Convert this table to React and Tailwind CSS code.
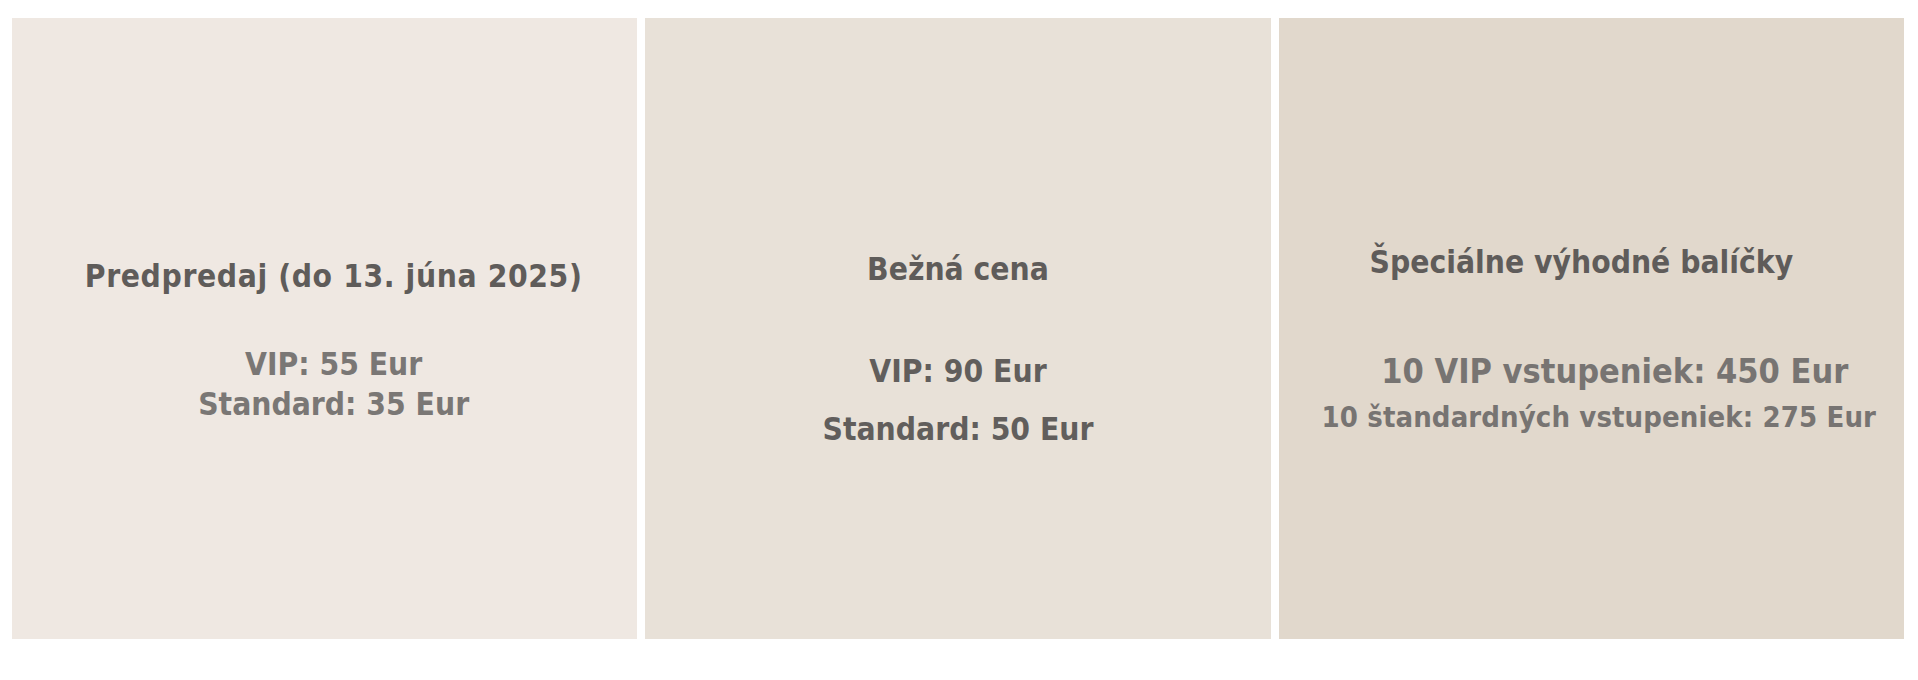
import React from "react";

const font = { fontFamily: '"DejaVu Sans Condensed", "DejaVu Sans", Verdana, sans-serif' };

function App() {
  return (
    <div className="w-[1918px] h-[680px] bg-white pt-[18px] pl-[12px] pr-[14px]" style={font}>
      <div className="grid grid-cols-3 gap-2 h-[621px]">
        {/* predpredaj */}
        <div className="bg-[#efe8e2] flex flex-col items-center pt-[238px] pl-[18px] font-bold text-center">
          <div className="text-[31.5px] leading-[40px] tracking-[0.6px] text-[#5f5c5a]">Predpredaj (do 13. júna 2025)</div>
          <div className="mt-[48px] text-[31.5px] leading-[40px] text-[#7a7775]">VIP: 55 Eur</div>
          <div className="text-[31.5px] leading-[40px] text-[#7a7775]">Standard: 35 Eur</div>
        </div>

        {/* bezna cena */}
        <div className="bg-[#e8e1d8] flex flex-col items-center pt-[231px] font-bold text-center">
          <div className="text-[31.5px] leading-[40px] text-[#5f5c5a]">Bežná cena</div>
          <div className="mt-[62px] text-[31.5px] leading-[40px] text-[#615e5c]">VIP: 90 Eur</div>
          <div className="mt-[18px] text-[31.5px] leading-[40px] text-[#615e5c]">Standard: 50 Eur</div>
        </div>

        {/* balicky */}
        <div className="bg-[#e1d8cc] flex flex-col items-center pt-[224px] font-bold text-center">
          <div className="pr-[20px] text-[31.5px] leading-[40px] text-[#5f5c5a]">Špeciálne výhodné balíčky</div>
          <div className="mt-[69px] pl-[47px] text-[34px] leading-[40px] text-[#777472]">10 VIP vstupeniek: 450 Eur</div>
          <div className="mt-[6px] pl-[15px] text-[29px] leading-[40px] tracking-[0.1px] text-[#777472]">10 štandardných vstupeniek: 275 Eur</div>
        </div>
      </div>
    </div>
  );
}

export default App;
